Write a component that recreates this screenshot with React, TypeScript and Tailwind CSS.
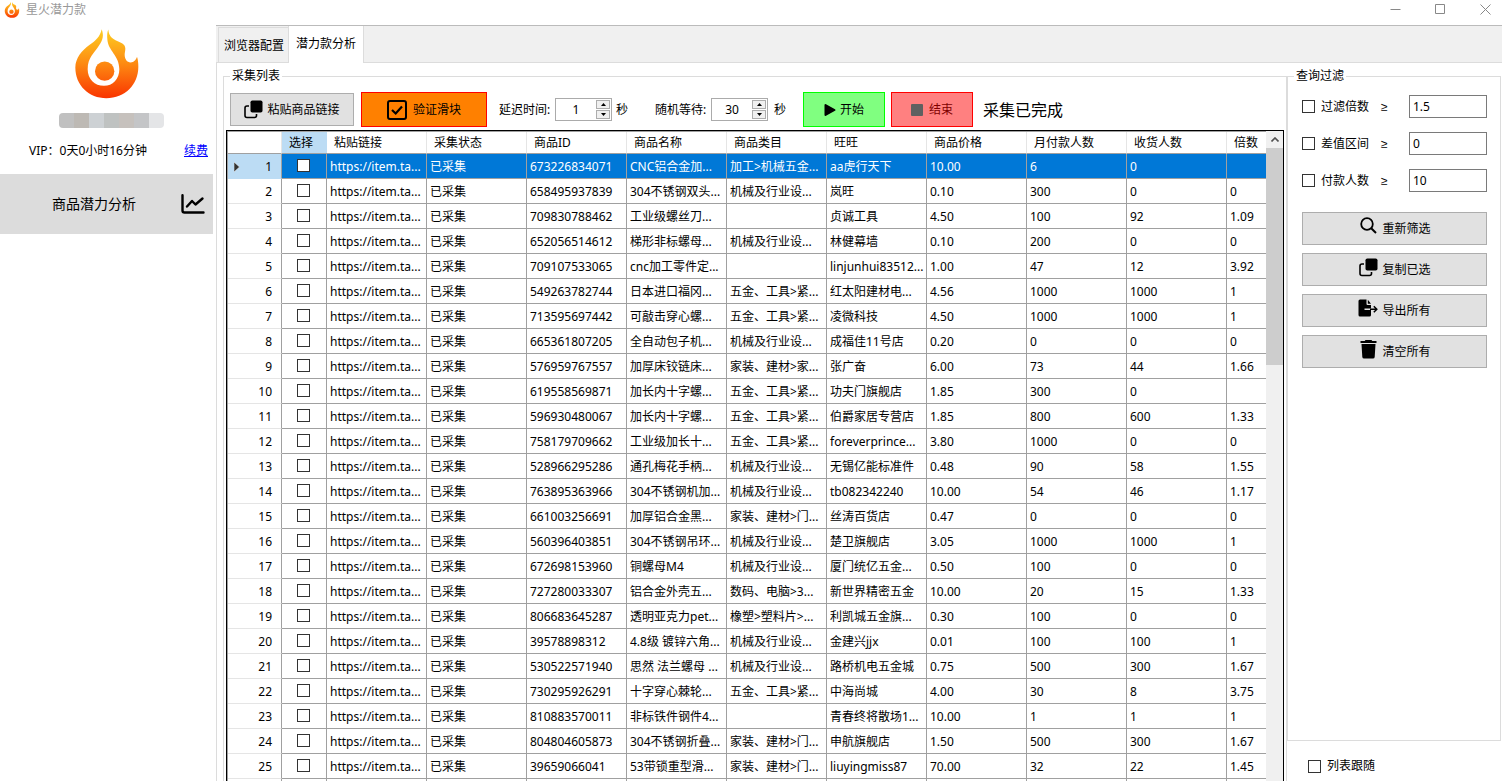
import React from 'react';

type Row = [string, string, string, string, string, string, string, string];

// id, name, category, shop, price, paid, received, ratio
const rows: Row[] = [
  ['673226834071', 'CNC铝合金加...', '加工>机械五金...', 'aa虎行天下', '10.00', '6', '0', ''],
  ['658495937839', '304不锈钢双头...', '机械及行业设...', '岚旺', '0.10', '300', '0', '0'],
  ['709830788462', '工业级螺丝刀...', '', '贞诚工具', '4.50', '100', '92', '1.09'],
  ['652056514612', '梯形非标螺母...', '机械及行业设...', '林健幕墙', '0.10', '200', '0', '0'],
  ['709107533065', 'cnc加工零件定...', '', 'linjunhui83512...', '1.00', '47', '12', '3.92'],
  ['549263782744', '日本进口福冈...', '五金、工具>紧...', '红太阳建材电...', '4.56', '1000', '1000', '1'],
  ['713595697442', '可敲击穿心螺...', '五金、工具>紧...', '凌微科技', '4.50', '1000', '1000', '1'],
  ['665361807205', '全自动包子机...', '机械及行业设...', '成福佳11号店', '0.20', '0', '0', '0'],
  ['576959767557', '加厚床铰链床...', '家装、建材>家...', '张广奋', '6.00', '73', '44', '1.66'],
  ['619558569871', '加长内十字螺...', '五金、工具>紧...', '功夫门旗舰店', '1.85', '300', '0', ''],
  ['596930480067', '加长内十字螺...', '五金、工具>紧...', '伯爵家居专营店', '1.85', '800', '600', '1.33'],
  ['758179709662', '工业级加长十...', '五金、工具>紧...', 'foreverprince...', '3.80', '1000', '0', '0'],
  ['528966295286', '通孔梅花手柄...', '机械及行业设...', '无锡亿能标准件', '0.48', '90', '58', '1.55'],
  ['763895363966', '304不锈钢机加...', '机械及行业设...', 'tb082342240', '10.00', '54', '46', '1.17'],
  ['661003256691', '加厚铝合金黑...', '家装、建材>门...', '丝涛百货店', '0.47', '0', '0', '0'],
  ['560396403851', '304不锈钢吊环...', '机械及行业设...', '楚卫旗舰店', '3.05', '1000', '1000', '1'],
  ['672698153960', '铜螺母M4', '机械及行业设...', '厦门统亿五金...', '0.50', '100', '0', '0'],
  ['727280033307', '铝合金外壳五...', '数码、电脑>3...', '新世界精密五金', '10.00', '20', '15', '1.33'],
  ['806683645287', '透明亚克力pet...', '橡塑>塑料片>...', '利凯城五金旗...', '0.30', '100', '0', '0'],
  ['39578898312', '4.8级 镀锌六角...', '机械及行业设...', '金建兴jjx', '0.01', '100', '100', '1'],
  ['530522571940', '思然 法兰螺母 ...', '机械及行业设...', '路桥机电五金城', '0.75', '500', '300', '1.67'],
  ['730295926291', '十字穿心棘轮...', '五金、工具>紧...', '中海尚城', '4.00', '30', '8', '3.75'],
  ['810883570011', '非标铁件钢件4...', '', '青春终将散场1...', '10.00', '1', '1', '1'],
  ['804804605873', '304不锈钢折叠...', '家装、建材>门...', '申航旗舰店', '1.50', '500', '300', '1.67'],
  ['39659066041', '53带锁重型滑...', '家装、建材>门...', 'liuyingmiss87', '70.00', '32', '22', '1.45'],
];

const columns = ['粘贴链接', '采集状态', '商品ID', '商品名称', '商品类目', '旺旺', '商品价格', '月付款人数', '收货人数', '倍数'];

const mosaic = ['bg-[#c0c0c0]', 'bg-[#bdb9b4]', 'bg-[#cdd1d4]', 'bg-[#bfc2c1]', 'bg-[#c6c1bd]', 'bg-[#c4c5c7]', 'bg-[#e4e5e7]'];

const checkboxClass = 'block size-[13px] shrink-0 appearance-none border border-[#333] bg-white checked:bg-[#0078d7]';

const Logo: React.FC<{ className: string; id: string }> = ({ className, id }) => (
  <svg className={className} viewBox="14 13 192 209" aria-hidden="true">
    <defs>
      <linearGradient id={id} gradientUnits="userSpaceOnUse" x1="0" y1="13" x2="0" y2="220">
        <stop offset="0" stopColor="#fdcf22" />
        <stop offset="0.5" stopColor="#fd8a12" />
        <stop offset="1" stopColor="#f93400" />
      </linearGradient>
    </defs>
    <path
      fill={`url(#${id})`}
      d="M94 13C89 36 76 47 58 60C34 77 15 101 15 128C15 182 56 220 108 220C164 220 204 180 204 126C204 115 203 104 200 96C197 106 190 113 181 113C170 113 163 103 163 90C163 83 165 78 165 71C165 57 151 54 137 47C123 40 115 31 114 14C110 23 110 33 111 43C113 78 147 91 147 133C147 162 127 183 101 183C73 183 52 162 52 133C52 98 72 84 86 62C98 44 101 32 94 13Z"
    />
    <circle cx="103" cy="139" r="29" fill={`url(#${id})`} />
  </svg>
);

const CopyIcon: React.FC = () => (
  <svg className="w-[19px] h-[19px]" viewBox="0 0 19 19" aria-hidden="true">
    <rect x="6.5" y="0.5" width="12" height="12" rx="1.8" />
    <path d="M5 6H3a2 2 0 0 0-2 2v7.500a2 2 0 0 0 2 2h7.500a2 2 0 0 0 2-2V14" fill="none" stroke="currentColor" strokeWidth="1.6" />
  </svg>
);

const SearchIcon: React.FC = () => (
  <svg className="w-[17px] h-[17px]" viewBox="0 0 17 17" fill="none" stroke="currentColor" strokeWidth="1.8" aria-hidden="true">
    <circle cx="7" cy="7" r="5.8" />
    <path d="M11.200 11.200L16 16" strokeWidth="2" />
  </svg>
);

const ExportIcon: React.FC = () => (
  <svg className="w-[20px] h-[18px]" viewBox="0 0 20 18" aria-hidden="true">
    <path d="M2 0.500h6.500V5a1 1 0 0 0 1 1H13v3.500H6.500v1.500H13v5a1.500 1.500 0 0 1-1.500 1.500H2A1.500 1.500 0 0 1 0.500 16V2A1.500 1.500 0 0 1 2 0.500Z" />
    <path d="M9.800 0.700L13 4.700H9.800Z" />
    <path d="M12 10.300h6.500M15.800 7.300l3 3-3 3" fill="none" stroke="currentColor" strokeWidth="1.500" />
  </svg>
);

const TrashIcon: React.FC = () => (
  <svg className="w-[17px] h-[19px]" viewBox="0 0 17 19" aria-hidden="true">
    <path d="M5.500 0h6l0.800 1H16.500V3H0.500V1H4.700Z" />
    <path d="M1.500 4h14l-0.800 13a1.800 1.800 0 0 1-1.800 1.600H4.100a1.800 1.800 0 0 1-1.800-1.600Z" />
  </svg>
);

const Spinner: React.FC<{ id: string; label: string; value: string }> = ({ id, label, value }) => (
  <div className="flex items-center">
    <label htmlFor={id} className="w-14 whitespace-nowrap">{label}</label>
    <div className="flex h-[23px] w-[57px] border border-[#ababab] bg-white">
      <input id={id} defaultValue={value} inputMode="numeric" className="w-[40px] min-w-0 text-center outline-none" />
      <div className="flex flex-col gap-px py-px">
        <button type="button" aria-label="增加" className="flex h-[9px] w-[14px] items-center justify-center border border-[#adadad] bg-[#f0f0f0]">
          <svg className="w-[5px] h-[3px]" viewBox="0 0 5 3"><path d="M2.500 0L5 3H0Z" /></svg>
        </button>
        <button type="button" aria-label="减少" className="flex h-[9px] w-[14px] items-center justify-center border border-[#adadad] bg-[#f0f0f0]">
          <svg className="w-[5px] h-[3px]" viewBox="0 0 5 3"><path d="M0 0H5L2.500 3Z" /></svg>
        </button>
      </div>
    </div>
  </div>
);

const FilterRow: React.FC<{ id: string; label: string; value: string }> = ({ id, label, value }) => (
  <div className="flex h-[23px] items-center">
    <input id={id} type="checkbox" className={checkboxClass} />
    <label htmlFor={id} className="ml-1.5 w-[60px] whitespace-nowrap">{label}</label>
    <span className="flex-1 font-['Liberation_Sans',sans-serif]">≥</span>
    <input aria-label={label} defaultValue={value} className="h-[23px] w-[78px] border border-[#7a7a7a] px-[3px] outline-none" />
  </div>
);

const SideButton: React.FC<{ icon: React.ReactNode; label: string }> = ({ icon, label }) => (
  <button type="button" className="flex h-[33px] items-center justify-center gap-1 border border-[#adadad] bg-[#e1e1e1]">
    <span className="flex h-6 w-5 items-start justify-center">{icon}</span>
    {label}
  </button>
);

const ProductTable: React.FC = () => (
  <table className="w-full table-fixed border-separate border-spacing-0 text-left">
    <colgroup>
      <col className="w-[54px]" />
      <col className="w-[45px]" />
      {columns.map((name) => (
        <col key={name} className={name === '倍数' ? '' : 'w-[100px]'} />
      ))}
    </colgroup>
    <thead>
      <tr className="h-[22px]">
        <th aria-label="序号" className="border-b border-r border-b-[#a0a0a0] border-r-[#e5e5e5] p-0" />
        <th className="border-b border-[#a0a0a0] bg-[#bcdcf4] p-0 pl-[7px] font-normal">选择</th>
        {columns.map((name) => (
          <th key={name} className="whitespace-nowrap border-b border-r border-b-[#a0a0a0] border-r-[#e5e5e5] p-0 pl-[7px] font-normal last:border-r-0">
            {name}
          </th>
        ))}
      </tr>
    </thead>
    <tbody>
      {rows.map((row, idx) => (
        <tr key={row[0]} className={idx === 0 ? 'h-[25px] bg-[#0078d7] text-white' : 'h-[25px]'}>
          <th
            className={
              idx === 0
                ? 'border-b border-r border-b-[#bcdcf4] border-r-[#a0a0a0] bg-[#bcdcf4] p-0 pt-px font-normal text-black'
                : 'border-b border-r border-b-[#e5e5e5] border-r-[#a0a0a0] p-0 pt-px font-normal text-black'
            }
          >
            <div className="flex items-center justify-between pl-1.5 pr-[9px]">
              {idx === 0 ? (
                <svg className="w-[6px] h-[10px]" viewBox="0 0 6 10"><path d="M0 0L5.500 5L0 10Z" fill="#333" stroke="#fff" strokeWidth="0.500" /></svg>
              ) : (
                <span />
              )}
              {idx + 1}
            </div>
          </th>
          <td className="border-b border-r border-[#a0a0a0] p-0 pr-0.5 align-top">
            <input type="checkbox" aria-label={`选择 ${idx + 1}`} className={`${checkboxClass} mx-auto mt-[5px]`} />
          </td>
          {['https://item.ta...', '已采集', ...row].map((cell, cIdx) => (
            <td key={cIdx} className="overflow-hidden whitespace-nowrap border-b border-r border-[#a0a0a0] p-0 pl-[3px] pt-px last:border-r-0">
              {cell}
            </td>
          ))}
        </tr>
      ))}
      {/* Next row, cut off by the window edge */}
      <tr className="h-[25px]">
        <th aria-label="26" className="border-r border-[#a0a0a0] p-0" />
        <td className="border-r border-[#a0a0a0] p-0" />
        {columns.map((name) => (
          <td key={name} className="border-r border-[#a0a0a0] p-0 last:border-r-0" />
        ))}
      </tr>
    </tbody>
  </table>
);

const Sidebar: React.FC = () => (
  <aside className="flex w-[213px] shrink-0 flex-col">
    <div className="flex flex-col items-center pt-1">
      <Logo className="w-16 h-[70px]" id="logo-large" />
      <div className="ml-2.5 mt-3.5 flex h-[15px] w-[105px] overflow-hidden rounded-sm">
        {mosaic.map((color) => (
          <div key={color} className={`flex-1 ${color}`} />
        ))}
      </div>
    </div>
    <div className="mt-3.5 flex h-[18px] items-center justify-between pl-[29px] pr-[5px]">
      <span>VIP：0天0小时16分钟</span>
      <a href="#renew" className="text-[#0000ff] underline">续费</a>
    </div>
    <button type="button" className="mt-3.5 flex h-[60px] items-center justify-between bg-[#dcdcdc] pl-[52px] pr-2 text-sm">
      商品潜力分析
      <svg className="w-6 h-5" viewBox="0 0 24 20" fill="none" stroke="#000" strokeWidth="2.400" strokeLinecap="round" strokeLinejoin="round" aria-hidden="true">
        <path d="M1.500 1.200V16.500a2 2 0 0 0 2 2H22.500" />
        <path d="M6 12.500L11 7L14.500 10.500L21.500 4.500" />
      </svg>
    </button>
  </aside>
);

export default function App() {
  return (
    <div className="flex h-screen flex-col overflow-hidden bg-white font-['Noto_Sans','Noto_Sans_CJK_SC',sans-serif] text-xs leading-4 text-black">
      {/* Title bar */}
      <header className="flex h-[25px] shrink-0 items-start justify-between">
        <div className="flex items-center gap-1.5 pl-1 pt-0.5 text-[#999]">
          <Logo className="w-4 h-4" id="logo-small" />
          <span>星火潜力款</span>
        </div>
        <div className="flex text-[#888]">
          {['M0.500 5.500H10.500', 'M0.500 0.500H9.500V9.500H0.500Z', 'M0.500 0.500L10.500 10.500M10.500 0.500L0.500 10.500'].map((d, idx) => (
            <button key={d} type="button" aria-label={['最小化', '最大化', '关闭'][idx]} className="flex h-[18px] w-[45px] items-center justify-end pr-[11px]">
              <svg className="w-[11px] h-[11px]" viewBox="0 0 11 11" fill="none" stroke="currentColor"><path d={d} /></svg>
            </button>
          ))}
        </div>
      </header>

      <div className="flex min-h-0 flex-1">
        <Sidebar />

        <main className="ml-[3px] flex min-w-0 flex-1 flex-col">
          {/* Tabs */}
          <div className="flex h-[38px] shrink-0 border-b border-t border-b-[#dcdcdc] border-t-[#bbb] bg-[#f0f0f0] pl-0.5" role="tablist">
            <button type="button" role="tab" aria-selected="false" className="mt-px w-[70px] whitespace-nowrap border-l border-t border-[#dcdcdc] pl-[5px] pt-px text-left">
              浏览器配置
            </button>
            <button type="button" role="tab" aria-selected="true" className="-mb-px w-[76px] border-x border-[#dcdcdc] bg-white pb-0.5">
              潜力款分析
            </button>
          </div>

          <div className="flex min-h-0 flex-1 border-l border-[#dcdcdc] pl-1.5 pr-px pt-[5px]">
            <fieldset className="flex min-w-0 flex-1 flex-col border border-b-0 border-[#dcdcdc]">
              <legend className="ml-1.5 px-0.5">采集列表</legend>
              {/* Toolbar */}
              <div className="mt-2 flex h-[35px] shrink-0 items-center whitespace-nowrap pl-1.5">
                <button type="button" className="flex h-[33px] w-[124px] items-center justify-center gap-1 border border-[#adadad] bg-[#e1e1e1]">
                  <CopyIcon />
                  粘贴商品链接
                </button>
                <button type="button" className="ml-[7px] flex h-[35px] w-[126px] items-center justify-center gap-1.5 border border-[#ff0000] bg-[#ff8000]">
                  <svg className="w-5 h-5" viewBox="0 0 20 20" fill="none" stroke="#000" strokeWidth="2" aria-hidden="true">
                    <rect x="1" y="1" width="18" height="18" rx="2" />
                    <path d="M5 10L8.700 13.500L15 6.500" strokeWidth="2.200" />
                  </svg>
                  验证滑块
                </button>
                <div className="ml-3 flex items-center gap-1">
                  <Spinner id="delay" label="延迟时间:" value="1" />
                  <span>秒</span>
                </div>
                <div className="ml-[27px] flex items-center gap-1.5">
                  <Spinner id="random-wait" label="随机等待:" value="30" />
                  <span>秒</span>
                </div>
                <button type="button" className="ml-[17px] flex h-[35px] w-[82px] items-center justify-center gap-1 border border-[#00ff00] bg-[#80ff80]">
                  <svg className="w-3 h-3" viewBox="0 0 12 12"><path d="M0.500 1.200a1 1 0 0 1 1.500-1L11 5.200a1 1 0 0 1 0 1.600L2 11.800a1 1 0 0 1-1.500-1Z" /></svg>
                  开始
                </button>
                <button type="button" disabled className="ml-1.5 flex h-[35px] w-[82px] items-center justify-center gap-1.5 border border-[#ff0000] bg-[#ff8080] text-[#800000]">
                  <span className="size-3 rounded-[1px] bg-[#606060]" />
                  结束
                </button>
                <span className="ml-2.5 text-base">采集已完成</span>
              </div>

              <div className="ml-0.5 mr-0.5 mt-[3px] flex min-h-0 flex-1 border border-b-0 border-black">
                <div className="min-w-0 flex-1 overflow-hidden border-l border-t border-[#a0a0a0]">
                  <ProductTable />
                </div>
                {/* Scrollbar */}
                <div className="flex w-[17px] shrink-0 flex-col bg-[#f0f0f0]">
                  <button type="button" aria-label="向上滚动" className="flex h-[17px] items-center justify-center">
                    <svg className="w-2 h-[5px]" viewBox="0 0 8 5" fill="none" stroke="#505050" strokeWidth="1.600"><path d="M0.500 4.500L4 1L7.500 4.500" /></svg>
                  </button>
                  <div className="h-1/3 bg-[#cdcdcd]" />
                </div>
              </div>
            </fieldset>

            {/* Filter panel */}
            <div className="flex w-[214px] shrink-0 flex-col">
              <fieldset className="flex min-w-0 flex-1 flex-col border border-[#dcdcdc] pl-3.5 pr-[13px]">
                <legend className="-ml-2 px-0.5">查询过滤</legend>
                <div className="mt-[11px] flex flex-col gap-3.5">
                  <FilterRow id="ratio" label="过滤倍数" value="1.5" />
                  <FilterRow id="diff" label="差值区间" value="0" />
                  <FilterRow id="paid" label="付款人数" value="10" />
                </div>
                <div className="mt-5 flex flex-col gap-2">
                  <SideButton icon={<SearchIcon />} label="重新筛选" />
                  <SideButton icon={<CopyIcon />} label="复制已选" />
                  <SideButton icon={<ExportIcon />} label="导出所有" />
                  <SideButton icon={<TrashIcon />} label="清空所有" />
                </div>
              </fieldset>
              <div className="flex h-10 shrink-0 items-center pl-[21px] pt-2.5">
                <input id="follow" type="checkbox" className={checkboxClass} />
                <label htmlFor="follow" className="ml-1.5">列表跟随</label>
              </div>
            </div>
          </div>
        </main>
      </div>
    </div>
  );
}
